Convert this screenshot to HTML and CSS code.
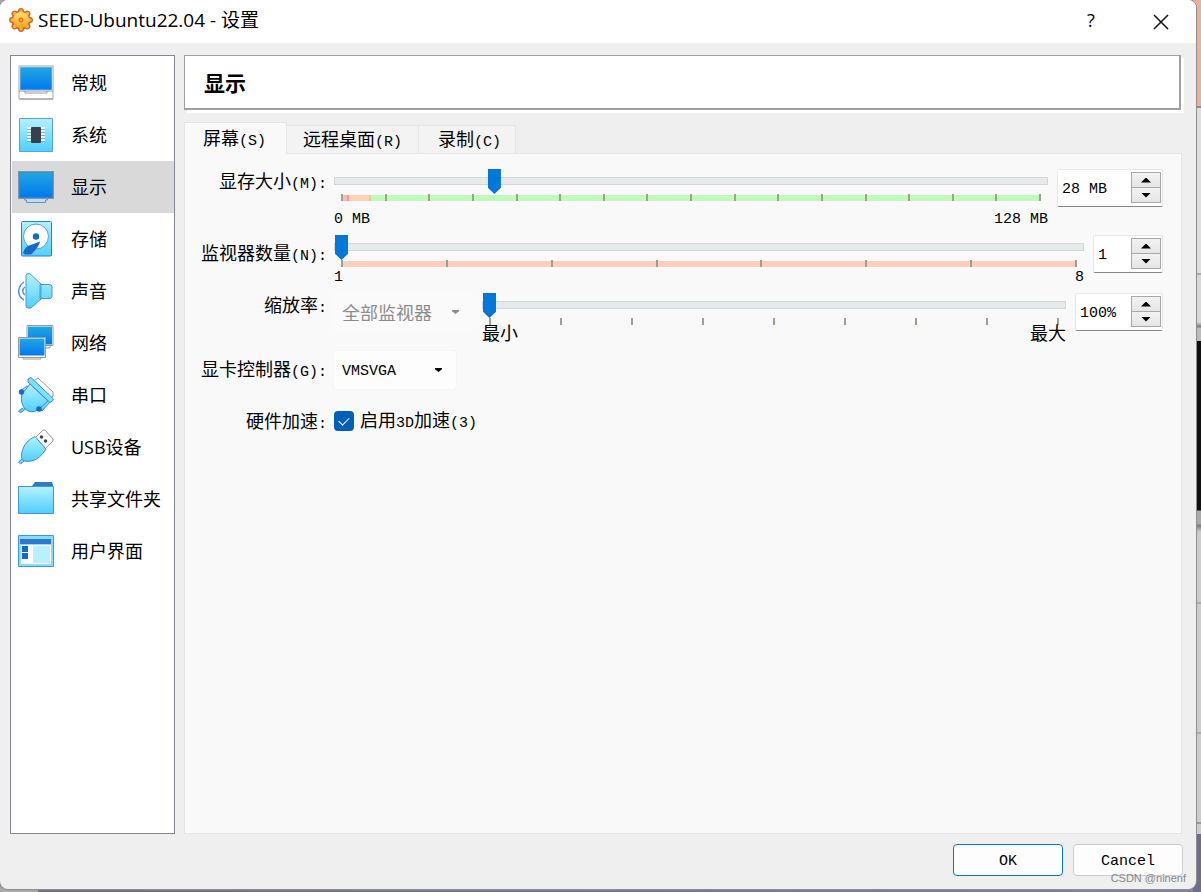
FILE: index.html
```html
<!DOCTYPE html>
<html lang="zh-CN">
<head>
    <meta charset="UTF-8">
    <meta name="viewport" content="width=device-width, initial-scale=1.0">
    <title>SEED-Ubuntu22.04 - 设置</title>
    <link rel="stylesheet" href="styles.css">
</head>
<body>
    <!-- 图标共用的渐变 -->
    <svg class="defs" width="0" height="0" aria-hidden="true">
        <defs>
            <linearGradient id="screen" x1="0" y1="0" x2="0" y2="1"><stop offset="0" stop-color="#22a7e0"/><stop offset="1" stop-color="#0078f0"/></linearGradient>
            <linearGradient id="sky" x1="0" y1="0" x2="0" y2="1"><stop offset="0" stop-color="#b4f2ff"/><stop offset="1" stop-color="#4fcfff"/></linearGradient>
            <linearGradient id="gold" x1="0" y1="0" x2="0" y2="1"><stop offset="0" stop-color="#ffe070"/><stop offset="1" stop-color="#f8a01c"/></linearGradient>
        </defs>
    </svg>

    <div class="window">
        <header class="titlebar">
            <svg class="app-icon" width="24" height="24" viewBox="0 0 24 24">
                <g stroke-linecap="round">
                    <path d="M12 3v18M3 12h18M5.600 5.600l12.800 12.800M18.400 5.600L5.600 18.400" stroke="#cf5f28" stroke-width="6"/>
                    <circle cx="12" cy="12" r="9.500" fill="#cf5f28"/>
                    <path d="M12 3v18M3 12h18M5.600 5.600l12.800 12.800M18.400 5.600L5.600 18.400" stroke="#fbb032" stroke-width="3.500"/>
                </g>
                <circle cx="12" cy="12" r="8" fill="url(#gold)"/>
                <circle cx="12" cy="12" r="2" fill="#f0a040" stroke="#c66b25"/>
            </svg>
            <span class="title">SEED-Ubuntu22.04 - 设置</span>
            <button class="win-btn" aria-label="帮助">?</button>
            <button class="win-btn" aria-label="关闭">
                <svg width="16" height="16" viewBox="0 0 16 16"><path d="M1 1l14 14M15 1L1 15" stroke="#111" stroke-width="1.500"/></svg>
            </button>
        </header>

        <main class="content">
            <nav class="sidebar">
                <button class="item">
                    <svg width="36" height="36" viewBox="0 0 36 36"><path d="M1 1h34v33H1z" fill="#fff" stroke="#a2a2a2"/><path d="M2 2h32v23H2z" fill="url(#screen)" stroke="#c9d8df" stroke-width=".6"/><path d="M1 26h34M7 26v2h22v-2M2 34h33" fill="#fff" stroke="#999"/></svg>
                    常规
                </button>
                <button class="item">
                    <svg width="36" height="36" viewBox="0 0 36 36"><path d="M1.500 1.500h33v33h-33z" fill="url(#sky)" stroke="#5b9fe0"/><path d="M9 11h18M9 14h18M9 17h18M9 20h18M9 23h18" stroke="#fff" stroke-width="1.500"/><path d="M9 12.500h18M9 15.500h18M9 18.500h18M9 21.500h18M9 24.500h18" stroke="#5d9bc4" stroke-width=".6"/><rect x="13" y="10" width="10" height="16" rx="1" fill="#3a3f4b"/></svg>
                    系统
                </button>
                <button class="item active">
                    <svg width="36" height="36" viewBox="0 0 36 36"><path d="M6.500 27.500h23V31h-2v2.500h-19V31h-2z" fill="#b9dcf8" stroke="#6b8fc0"/><path d="M0 2h36v28H0z" fill="#7e94ae"/><path d="M1.500 3.500h33v25h-33z" fill="url(#screen)" stroke="#3282bd" stroke-width=".6"/></svg>
                    显示
                </button>
                <button class="item">
                    <svg width="36" height="36" viewBox="0 0 36 36"><rect x="3.500" y=".5" width="30" height="34.500" rx="1" fill="url(#sky)" stroke="#2b7fd0"/><circle cx="18" cy="15.500" r="12.500" fill="#fff" stroke="#5a9ad8"/><circle cx="18" cy="15.500" r="3.200" fill="#1668cc"/><path d="M22 20.500c-1 5-5 9-9 13H7l-2-1.500c1-3 2-5 5-7z" fill="#1668cc"/></svg>
                    存储
                </button>
                <button class="item">
                    <svg width="36" height="36" viewBox="0 0 36 36"><path d="M6 9C-1 14-1 23 6 27M7 14c-3 2-3 6 0 8" fill="none" stroke="#4b95dd" stroke-width="1.500"/><path d="M22 11.500h9q3 0 3 2v10q0 2-3 2h-9zM8 2.500Q8 .5 10 .8h2L23 11v15L13 35h-3q-2 0-2-2z" fill="url(#sky)" stroke="#4b95dd"/></svg>
                    声音
                </button>
                <button class="item">
                    <svg width="36" height="36" viewBox="0 0 36 36"><path d="M13 20h19v3H17z" fill="#fff" stroke="#999"/><path d="M9 .5h26v20H9z" fill="#fff" stroke="#999"/><path d="M10 1.500h24v18H10z" fill="url(#screen)"/><path d="M5 31h18v3H5z" fill="#fff" stroke="#999"/><path d="M.5 12.500h27v20H.5z" fill="#fff" stroke="#999"/><path d="M1.500 13.500h25v17h-25z" fill="url(#screen)"/></svg>
                    网络
                </button>
                <button class="item">
                    <svg width="36" height="36" viewBox="0 0 36 36"><path d="M16 4l4-3 15 14v4l-3 3z" fill="#fff" stroke="#999"/><path d="M5 31L.5 34l2 2 5-4M9 9l-8 6 4 3 8-7zM28 21l-7 9 3 4 8-9z" fill="url(#sky)" stroke="#3d8bd8"/><path d="M12 7L4 17q-2 9 3 15 6 5 13 1l10-9z" fill="url(#sky)" stroke="#3d8bd8"/><path d="M10 2l3-1.500 22 21v2l-3 2L10 5z" fill="#7ce1ff" stroke="#3d8bd8"/><circle cx="3.500" cy="15" r="2.700" fill="#1668cc"/><circle cx="21" cy="32" r="2.800" fill="#1668cc"/></svg>
                    串口
                </button>
                <button class="item">
                    <svg width="36" height="36" viewBox="0 0 36 36"><path d="M17 9l8-8h2l8 9v2l-8 8z" fill="#fff" stroke="#999"/><circle cx="23.500" cy="8" r="1.800" fill="#444"/><circle cx="27.500" cy="12" r="1.800" fill="#444"/><path d="M4 30L.5 33l2 2L6 32" fill="#6bd8ff" stroke="#3d8bd8"/><path d="M17 7.500l11 12.500C23 28 16 34 6 32q-4-3-2-9C6 15 10 11 17 7.500z" fill="url(#sky)" stroke="#3d8bd8"/></svg>
                    USB设备
                </button>
                <button class="item">
                    <svg width="36" height="36" viewBox="0 0 36 36"><path d="M14 5l3-4h17l1 3v3H14z" fill="#2e78d2"/><path d="M.5 5.500h35v27H.5z" fill="url(#sky)" stroke="#4294dc"/></svg>
                    共享文件夹
                </button>
                <button class="item">
                    <svg width="36" height="36" viewBox="0 0 36 36"><path d="M.5 2.500h35v31H.5z" fill="#88ddfc" stroke="#4294dc"/><path d="M3 12h30v19H3z" fill="#fff"/><path d="M2 6h31v5H2z" fill="#2e78d2"/><path d="M4 13h6v6H4zM4 20h6v6H4z" fill="#1668d0"/><path d="M15 13h17v17H15z" fill="#b9efff"/></svg>
                    用户界面
                </button>
            </nav>

            <section class="page">
                <h1 class="page-title">显示</h1>

                <div class="tabs" role="tablist">
                    <button class="tab selected" role="tab">屏幕<span class="en">(S)</span></button>
                    <button class="tab" role="tab">远程桌面<span class="en">(R)</span></button>
                    <button class="tab" role="tab">录制<span class="en">(C)</span></button>
                </div>

                <div class="panel">
                    <!-- 显存大小 -->
                    <label class="name" for="vram">显存大小<span class="en">(M):</span></label>
                    <div class="row">
                        <div class="slider">
                            <input type="range" id="vram" min="0" max="128" value="28">
                            <div class="ticks vram"><i></i><i></i><i></i><i></i><i></i><i></i><i></i><i></i><i></i><i></i><i></i><i></i><i></i><i></i><i></i><i></i><i></i></div>
                            <div class="limits spaced en"><span>0 MB</span><span>128 MB</span></div>
                        </div>
                        <div class="spin spin-l">
                            <input type="text" value="28 MB" aria-label="显存大小">
                            <div class="arrows"><button class="up" aria-label="增加"></button><button class="down" aria-label="减少"></button></div>
                        </div>
                    </div>

                    <!-- 监视器数量 -->
                    <label class="name middle" for="monitors">监视器数量<span class="en">(N):</span></label>
                    <div class="row">
                        <div class="slider">
                            <input type="range" id="monitors" min="1" max="8" value="1">
                            <div class="ticks monitors"><i></i><i></i><i></i><i></i><i></i><i></i><i></i><i></i></div>
                            <div class="limits en"><span>1</span><span>8</span></div>
                        </div>
                        <div class="spin spin-s">
                            <input type="text" value="1" aria-label="监视器数量">
                            <div class="arrows"><button class="up" aria-label="增加"></button><button class="down" aria-label="减少"></button></div>
                        </div>
                    </div>

                    <!-- 缩放率 -->
                    <label class="name" for="scale">缩放率<span class="en">:</span></label>
                    <div class="row">
                        <div class="combo combo-l disabled">
                            <select aria-label="监视器" disabled><option>全部监视器</option></select>
                        </div>
                        <div class="slider">
                            <input type="range" id="scale" min="100" max="200" value="100">
                            <div class="ticks"><i></i><i></i><i></i><i></i><i></i><i></i><i></i><i></i><i></i></div>
                            <div class="limits"><span>最小</span><span>最大</span></div>
                        </div>
                        <div class="spin spin-m">
                            <input type="text" value="100%" aria-label="缩放率">
                            <div class="arrows"><button class="up" aria-label="增加"></button><button class="down" aria-label="减少"></button></div>
                        </div>
                    </div>

                    <label class="name middle" for="controller">显卡控制器<span class="en">(G):</span></label>
                    <div class="row">
                        <div class="combo combo-s">
                            <select id="controller" class="en"><option>VMSVGA</option></select>
                        </div>
                    </div>

                    <span class="name last">硬件加速<span class="en">:</span></span>
                    <label class="check last">
                        <input type="checkbox" checked>
                        <span>启用<span class="en">3D</span>加速<span class="en">(3)</span></span>
                    </label>
                </div>
            </section>
        </main>

        <footer class="footer">
            <button class="btn primary">OK</button>
            <button class="btn">Cancel</button>
        </footer>
        <span class="watermark">CSDN @ninenf</span>
    </div>
</body>
</html>
```
FILE: styles.css
```css
* {
    box-sizing: border-box;
}

/* 窗口后面露出的桌面 */
body {
    display: flex;
    min-height: 100vh;
    margin: 0;
    padding: 0 5px 3px 0;
    background:
        linear-gradient(#eab09a 0 106px, #a08880 106px 108px, #dedede 108px 273px, #aaa 273px 275px, #d8d8d8 275px 322px, #777 327px, #bbb 328px 341px, #111 341px 510px, #aaa 511px 524px, #777 525px, #ccc 532px 602px, #aaa 602px 604px, #ccc 604px 732px, #aaa 732px 734px, #ccc 734px 822px, #999 822px 824px, #ccc 824px 834px, #6f6d8c 834px) right top / 8px 100% no-repeat,
        linear-gradient(90deg, #a8a8a8 38px, #76747f 38px, #77758f 50%, #8583a0);
    font-family: "Noto Sans CJK SC", sans-serif;
    font-size: 18px;
    line-height: 18px;
    color: #000;
}

button, input, select {
    margin: 0;
    padding: 0;
    border: none;
    background: none;
    font: inherit;
    color: inherit;
}

.defs {
    position: absolute;
}

/* 西文等宽，宽度为汉字的一半 */
.en {
    font-family: "Liberation Mono", monospace;
    font-size: 15px;
    line-height: 1;
}

.window {
    position: relative;
    display: flex;
    flex-direction: column;
    flex: 1;
    background: #efefef;
    border-radius: 8px;
    box-shadow: 0 0 0 1px #8e8e8e;
    overflow: hidden;
}

/* 标题栏 */
.titlebar {
    display: flex;
    align-items: center;
    height: 43px;
    padding: 0 0 3px 9px;
    background: #fff;
}

.title {
    flex: 1;
    margin-left: 5px;
    font-family: "Open Sans", "Noto Sans CJK SC", sans-serif;
    font-size: 19px;
}

.win-btn {
    width: 70px;
    height: 40px;
    font-family: "Open Sans", sans-serif;
}

.win-btn svg {
    vertical-align: middle;
}

.content {
    display: flex;
    flex: 1;
    gap: 9px;
    padding: 12px 14px 0 10px;
}

/* 左侧列表 */
.sidebar {
    width: 165px;
    padding: 1px 0 1px 1px;
    background: #fff;
    border: 1px solid #828790;
}

.item {
    display: flex;
    align-items: center;
    gap: 17px;
    width: 100%;
    height: 52px;
    padding-left: 6px;
    font-family: "Open Sans", "Noto Sans CJK SC", sans-serif;
}

.item.active {
    background: #d9d9d9;
}

.page {
    display: flex;
    flex: 1;
    flex-direction: column;
}

.page-title {
    margin: 0 1px 12px 0;
    padding: 0 19px;
    border: solid #a0a0a0;
    border-width: 1px 2px 2px 1px;
    box-shadow: 3px 3px 0 #fff;
    background: #fff;
    font-size: 21px;
    line-height: 52px;
}

/* 标签页 */
.tabs {
    display: flex;
    align-items: flex-end;
}

.tab {
    height: 28px;
    padding: 0 16px;
    background: #f3f3f3;
    border: 1px solid #e5e5e5;
    border-width: 1px 1px 0 0;
}

.tab:last-child {
    padding: 0 14px 0 19px;
}

.tab.selected {
    position: relative;
    height: 32px;
    margin-bottom: -1px;
    padding: 0 20px 0 18px;
    background: #f9f9f9;
    border-left-width: 1px;
}

.panel {
    display: grid;
    flex: 1;
    grid-template-columns: 142px 1fr;
    align-content: start;
    gap: 8px 7px;
    padding: 15px 18px 15px 0;
    background: #f9f9f9;
    border: 1px solid #e5e5e5;
}

.name {
    line-height: 22px;
    text-align: right;
}

.name.middle {
    line-height: 34px;
}

.last {
    margin-top: 12px;
}

.row {
    display: flex;
    align-items: flex-start;
    gap: 9px;
}

/* 滑块 */
.slider {
    flex: 1;
}

.slider input {
    display: block;
    width: 100%;
    height: 24px;
    margin-bottom: 1px;
    appearance: none;
}

.slider input::-webkit-slider-runnable-track {
    height: 8px;
    background: #e7eaea;
    border: 1px solid #d6d6d6;
}

.slider input::-webkit-slider-thumb {
    width: 13px;
    height: 25px;
    margin-top: -9px;
    appearance: none;
    background: #0078d7;
    clip-path: polygon(0 0, 100% 0, 100% 75%, 50% 100%, 0 75%);
}

.ticks {
    display: flex;
    justify-content: space-between;
    height: 7px;
    margin: 0 7px;
}

.ticks i {
    width: 2px;
    background: #a0a090;
}

.ticks.vram {
    background: linear-gradient(90deg, #ffb9b9 6px, #f89c8c 6px 8px, #fcd2bd 8px 28px, #d5d59a 28px 30px, #c1f8bd 30px) 0 1px no-repeat;
}

.ticks.monitors {
    background: linear-gradient(#fcd0bc, #fcd0bc) 0 1px no-repeat;
}

.limits {
    display: flex;
    justify-content: space-between;
    height: 18px;
    line-height: 14px;
}

.limits.en {
    line-height: 22px;
}

.limits.spaced {
    margin-top: 8px;
}

/* 数值框 */
.spin {
    display: flex;
    height: 38px;
    padding: 2px 1px 0 4px;
    background: #fff;
    border: 1px solid #e8e8e8;
    border-bottom-color: #868686;
    border-radius: 2px;
}

.spin input {
    flex: 1;
    min-width: 0;
    padding-top: 2px;
    font-family: "Liberation Mono", monospace;
    font-size: 15px;
}

.spin-l {
    width: 106px;
}

.spin-m {
    width: 88px;
}

.spin-s {
    width: 70px;
}

.arrows {
    display: flex;
    flex-direction: column;
    width: 30px;
}

.arrows button {
    display: flex;
    align-items: center;
    justify-content: center;
    height: 16px;
    background: linear-gradient(#f2f2f2, #e6e6e6);
    border: 1px solid #a8a8a8;
}

.arrows .down {
    margin-top: -1px;
}

.arrows button::before {
    width: 10px;
    height: 5px;
    background: #000;
    content: "";
}

.arrows .up::before {
    clip-path: polygon(50% 0, 100% 100%, 0 100%);
}

.arrows .down::before {
    clip-path: polygon(0 0, 100% 0, 50% 100%);
}

/* 下拉框 */
.combo {
    position: relative;
    height: 38px;
    background: #fdfdfd;
    border-radius: 3px;
    box-shadow: 0 0 1px #ddd;
}

.combo-l {
    width: 139px;
}

.combo-s {
    width: 122px;
}

.combo select {
    width: 100%;
    height: 100%;
    padding-left: 8px;
    appearance: none;
    opacity: 1;
}

.combo .en {
    padding-top: 3px;
}

.combo::after {
    position: absolute;
    top: 17px;
    right: 14px;
    width: 7px;
    height: 4px;
    background: #000;
    clip-path: polygon(0 0, 100% 0, 100% 30%, 50% 100%, 0 30%);
    content: "";
}

.combo.disabled {
    background: #fafafa;
    box-shadow: none;
    color: #8c8c8c;
}

.combo.disabled::after {
    background: #8c8c8c;
}

.check {
    display: flex;
    align-items: center;
    justify-self: start;
    gap: 6px;
}

.check input {
    display: flex;
    align-items: center;
    justify-content: center;
    width: 20px;
    height: 20px;
    appearance: none;
    background: #005fb8;
    border-radius: 4px;
}

.check input:checked::before {
    width: 9px;
    height: 5px;
    margin-bottom: 2px;
    border: solid #fff;
    border-width: 0 0 1px 1px;
    transform: rotate(-45deg);
    content: "";
}

.footer {
    display: flex;
    justify-content: flex-end;
    gap: 10px;
    padding: 10px 13px 13px;
}

.btn {
    width: 110px;
    height: 32px;
    padding-top: 3px;
    background: #fdfdfd;
    border: 1px solid #ccc;
    border-radius: 4px;
    font-family: "Liberation Mono", monospace;
    font-size: 15px;
}

.btn.primary {
    border-color: #0078d4;
}

.watermark {
    position: absolute;
    right: 10px;
    bottom: 2px;
    font-family: "Liberation Sans", sans-serif;
    font-size: 11px;
    color: #888;
}
```
